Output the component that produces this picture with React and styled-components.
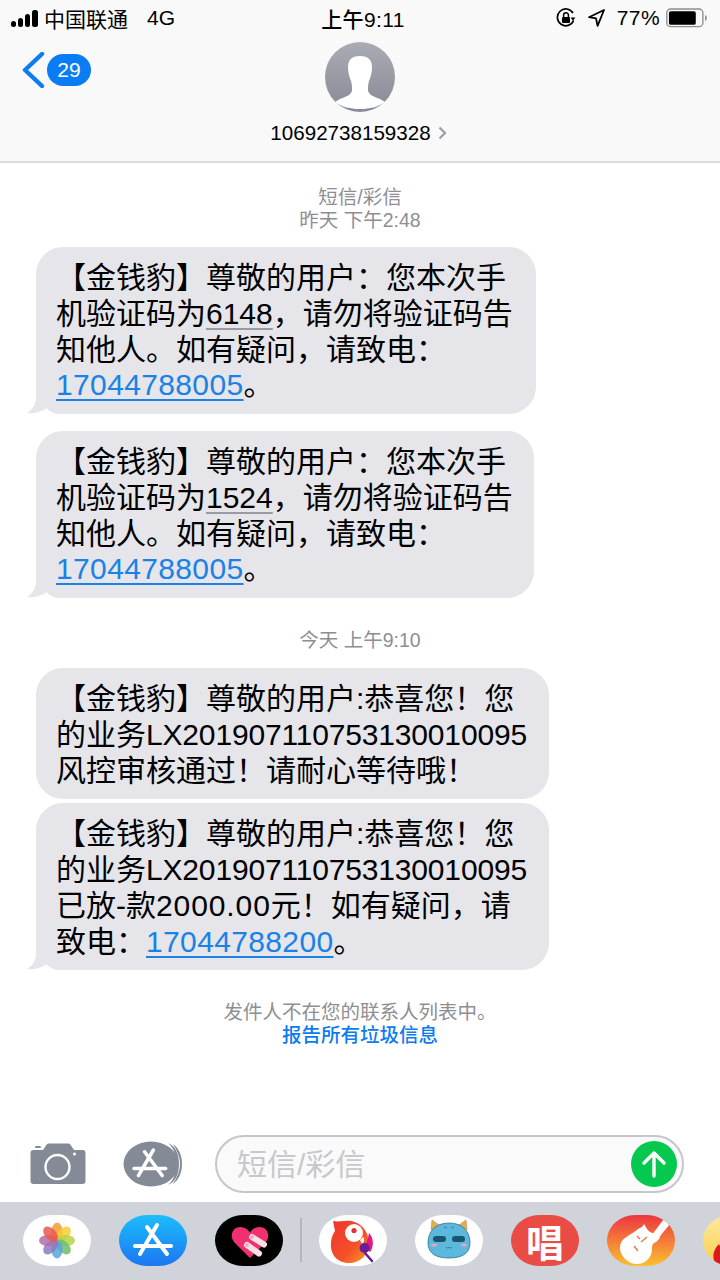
import styled, { createGlobalStyle } from "styled-components";

const GlobalStyle = createGlobalStyle`
  html, body {
    margin: 0;
    padding: 0;
    background: #fff;
  }
  body {
    font-family: "Liberation Sans", "Noto Sans CJK SC", sans-serif;
    color: #000;
  }
`;

const Page = styled.div`
  width: 720px;
  height: 1280px;
  display: flex;
  flex-direction: column;
  overflow: hidden;
`;

const Header = styled.header`
  height: 161px;
  flex: none;
  background: #f9f9f9;
  border-bottom: 2px solid #dcdcde;
`;

const StatusBar = styled.div`
  height: 36px;
  padding: 0 13px 0 11px;
  display: grid;
  grid-template-columns: 1fr auto 1fr;
  align-items: center;
  font-size: 21px;
`;

const StatusLeft = styled.div`
  display: flex;
  align-items: center;
  gap: 6px;
`;

const Carrier = styled.span`
  margin-right: 13px;
`;

const StatusRight = styled.div`
  display: flex;
  align-items: center;
  justify-content: flex-end;
  gap: 12px;
`;

const BatteryGroup = styled.div`
  display: flex;
  align-items: center;
  gap: 6px;
  letter-spacing: 0.4px;
`;

const Time = styled.div`
  font-weight: 500;
  margin-left: 8px;
  letter-spacing: 0.4px;
`;

const NavRow = styled.div`
  margin-top: 6px;
  display: grid;
  grid-template-columns: 1fr auto 1fr;
`;

const BackLink = styled.div`
  display: flex;
  align-items: center;
  align-self: start;
  gap: 2px;
  margin: 10px 0 0 22px;
  height: 36px;
`;

const CountBadge = styled.span`
  width: 44px;
  height: 32px;
  border-radius: 16px;
  background: #0a7cf6;
  color: #fff;
  font-size: 21px;
  display: flex;
  align-items: center;
  justify-content: center;
`;

const Contact = styled.div`
  display: flex;
  flex-direction: column;
  align-items: center;
  gap: 9px;
`;

const ContactName = styled.div`
  display: flex;
  align-items: center;
  gap: 7px;
  font-size: 20.6px;
  line-height: 24px;
  margin-left: -3px;
`;

const Thread = styled.main`
  flex: 1;
  padding: 23px 0 0 36px;
  display: flex;
  flex-direction: column;
  align-items: flex-start;
  overflow: hidden;
`;

const Stamp = styled.div`
  align-self: stretch;
  margin: ${(p) => p.$top || 0}px 36px ${(p) => p.$bottom || 0}px 0;
  text-align: center;
  color: #8e8e93;
  font-size: 19.5px;
  line-height: 23px;
`;

const Bubble = styled.div`
  position: relative;
  width: ${(p) => p.$width}px;
  box-sizing: border-box;
  margin-bottom: ${(p) => p.$gap}px;
  padding: 13px 0 11px 20px;
  background: #e5e5ea;
  border-radius: 27px;
  font-size: 30px;
  line-height: 35.75px;
  white-space: nowrap;
`;

const BubbleLine = styled.span`
  position: relative;
  z-index: 1;
`;

const BubbleTail = styled.svg`
  position: absolute;
  left: -10px;
  bottom: 0;
`;

const Code = styled.span`
  text-decoration: underline;
  text-decoration-color: #9a9aa2;
  text-decoration-thickness: 1.5px;
  text-underline-offset: 4px;
`;

const PhoneLink = styled.span`
  color: #1a82e6;
  letter-spacing: 0.36px;
  text-decoration: underline;
  text-decoration-thickness: 1.5px;
  text-underline-offset: 4px;
`;

const OrderNo = styled.span`
  letter-spacing: -0.17px;
`;

const Amount = styled.span`
  letter-spacing: 0.9px;
`;

const SpamNote = styled.div`
  align-self: stretch;
  margin: 31px 36px 0 0;
  text-align: center;
  font-size: 19.5px;
  line-height: 23px;
  color: #8e8e93;
`;

const SpamLink = styled.div`
  color: #0a7cf0;
  font-weight: 500;
`;

const Composer = styled.div`
  flex: none;
  height: 82px;
  box-sizing: border-box;
  padding: 15px 36px 9px 30px;
  display: flex;
  align-items: center;
`;

const CameraButton = styled.svg`
  margin-right: 37px;
  flex: none;
`;

const AppsButton = styled.svg`
  margin-right: 32px;
  flex: none;
`;

const InputPill = styled.div`
  flex: 1;
  height: 58px;
  box-sizing: border-box;
  border: 2px solid #c6c6cc;
  border-radius: 29px;
  background: #fafafa;
  padding: 0 5px 0 20px;
  display: flex;
  align-items: center;
  justify-content: space-between;
`;

const Placeholder = styled.span`
  color: #c7c7cc;
  font-size: 30px;
  line-height: 40px;
  margin-top: 2px;
`;

const SendButton = styled.span`
  width: 46px;
  height: 46px;
  border-radius: 50%;
  background: #05c84f;
  display: flex;
  align-items: center;
  justify-content: center;
`;

const Tray = styled.div`
  flex: none;
  height: 78px;
  box-sizing: border-box;
  padding: 13px 0 0 23px;
  background: #d0d3da;
  display: flex;
  align-items: flex-start;
  gap: 28px;
  overflow: hidden;
`;

const TrayApp = styled.div`
  flex: none;
  width: 68px;
  height: 51px;
  border-radius: 28px / 25.5px;
  overflow: ${(p) => (p.$clip ? "hidden" : "visible")};
  background: ${(p) => p.$bg || "#fff"};
  display: flex;
  align-items: center;
  justify-content: center;
`;

const SingGlyph = styled.span`
  color: #fff;
  font-family: "Noto Sans CJK SC", sans-serif;
  font-size: 38px;
  font-weight: 700;
  line-height: 46px;
`;

const TrayDivider = styled.div`
  flex: none;
  width: 2px;
  height: 44px;
  margin: 3px -11px 0;
  background: #b3b6bd;
`;

function Signal() {
  return (
    <svg width="27" height="17" viewBox="0 0 27 17">
      <rect x="0" y="11" width="5" height="6" rx="2.5" />
      <rect x="7" y="8" width="5" height="9" rx="2.5" />
      <rect x="14" y="4" width="5" height="13" rx="2.5" />
      <rect x="21" y="0" width="6" height="17" rx="2.5" />
    </svg>
  );
}

function OrientationLock() {
  return (
    <svg width="20" height="20" viewBox="0 0 20 20">
      <path d="M17.6 12.5A8.4 8.4 0 1 1 17 5" fill="none" stroke="#000" strokeWidth="1.7" />
      <path d="M14.6 9.6h4.8l-2.4 3.2z" />
      <rect x="6" y="9" width="8" height="6" rx="1" />
      <path d="M7.6 9V7.2a2.4 2.4 0 0 1 4.8 0V9" fill="none" stroke="#000" strokeWidth="1.5" />
    </svg>
  );
}

function LocationArrow() {
  return (
    <svg width="17" height="18" viewBox="0 0 17 18">
      <path d="M16 1 1 8.2l7 1.2 1.6 7.4z" fill="none" stroke="#000" strokeWidth="1.8" strokeLinejoin="round" />
    </svg>
  );
}

function Battery() {
  return (
    <svg width="41" height="20" viewBox="0 0 42 20">
      <rect x="0.8" y="0.8" width="37" height="18" rx="4" fill="none" stroke="#8f8f8f" strokeWidth="1.4" />
      <rect x="3" y="3" width="27.5" height="14" rx="2" />
      <path d="M40 7c1.4.4 1.8 1.6 1.8 3s-.4 2.6-1.8 3z" fill="#8f8f8f" />
    </svg>
  );
}

function BackChevron() {
  return (
    <svg width="23" height="36" viewBox="0 0 23 36">
      <path d="M20 2 3 18l17 16" fill="none" stroke="#0a7cf6" strokeWidth="4.4" strokeLinecap="round" strokeLinejoin="round" />
    </svg>
  );
}

function Avatar() {
  return (
    <svg width="70" height="70" viewBox="0 0 70 70">
      <defs>
        <linearGradient id="avatarFill" x1="0" y1="0" x2="0" y2="1">
          <stop offset="0" stopColor="#a9acb5" />
          <stop offset="1" stopColor="#878a94" />
        </linearGradient>
      </defs>
      <circle cx="35" cy="35" r="35" fill="url(#avatarFill)" />
      <path
        d="M35 14c7 0 12 3 12 11 0 5-1 9-3 14-1 3-1 6-1 9 0 5 7 7 12 9l5 3c-7 5-15 7-25 7s-18-2-25-7l5-3c5-2 12-4 12-9 0-3 0-6-1-9-2-5-3-9-3-14 0-8 5-11 12-11z"
        fill="#fff"
      />
    </svg>
  );
}

function DisclosureChevron() {
  return (
    <svg width="9" height="14" viewBox="0 0 9 14">
      <path d="M1.500 1.500 7 7l-5.500 5.500" fill="none" stroke="#9a9ea7" strokeWidth="2.200" />
    </svg>
  );
}

function Tail() {
  return (
    <BubbleTail width="40" height="28" viewBox="0 0 40 28">
      <path d="M10 0v11c0 8-4 13-9 16 7 1 14-1 19.700-5 3.300 3.500 6.300 6 12.300 6h7V0z" fill="#e5e5ea" />
    </BubbleTail>
  );
}

function Camera() {
  return (
    <CameraButton width="56" height="42" viewBox="0 0 56 42">
      <path
        fill="#858b96"
        d="M3.500 7H13l3.500-5.200C17.200.9 18 .5 19 .5h19c1 0 1.800.4 2.500 1.300L44 7h8.500C54.500 7 55.500 8 55.500 10v28c0 2-1 3-3 3h-49c-2 0-3-1-3-3V10c0-2 1-3 3-3z"
      />
      <rect x="5" y="3" width="6" height="2" rx="1" fill="#858b96" />
      <circle cx="27.500" cy="24" r="12" fill="none" stroke="#fff" strokeWidth="2.400" />
      <circle cx="44.500" cy="11" r="1.600" fill="#fff" />
    </CameraButton>
  );
}

function StoreMark({ x = 0, y = 0, scale = 1 }) {
  return (
    <g
      transform={`translate(${x} ${y}) scale(${scale})`}
      fill="none"
      stroke="#fff"
      strokeWidth="4"
      strokeLinecap="round"
    >
      <path d="M22 0 5 29" />
      <path d="M12 2 32 29" />
      <path d="M0 21h36" />
    </g>
  );
}

function AppsIcon() {
  return (
    <AppsButton width="60" height="46" viewBox="0 0 60 46">
      <ellipse cx="28" cy="23" rx="27.500" ry="22.500" fill="#858b96" />
      <path d="M45 2c8 3 11 12 11 21s-3 18-11 21c6-5 8-12 8-21S51 7 45 2z" fill="#858b96" />
      <path d="M50 3c6 4 9 12 9 20s-3 16-9 20c3-5 7-12 7-20S53 8 50 3z" fill="#858b96" />
      <StoreMark x={11} y={9} scale={0.88} />
    </AppsButton>
  );
}

function SendArrow() {
  return (
    <svg width="26" height="28" viewBox="0 0 26 28">
      <path d="M13 26V3M3 13 13 3l10 10" fill="none" stroke="#fff" strokeWidth="3.400" strokeLinecap="round" strokeLinejoin="round" />
    </svg>
  );
}

const PETALS = ["#f49a30", "#f7cc33", "#b7d445", "#6dbd70", "#58a5d8", "#8a7cc0", "#b36ea8", "#e8594d"];

function PhotosIcon() {
  return (
    <svg width="68" height="51" viewBox="0 0 68 51">
      {PETALS.map((color, i) => (
        <ellipse
          key={color}
          cx="34"
          cy="16.500"
          rx="5.600"
          ry="9"
          fill={color}
          opacity="0.85"
          transform={`rotate(${i * 45} 34 25.500)`}
        />
      ))}
    </svg>
  );
}

function StoreIcon() {
  return (
    <svg width="68" height="51" viewBox="0 0 68 51">
      <StoreMark x={16} y={10} scale={1} />
    </svg>
  );
}

function HeartIcon() {
  return (
    <svg width="68" height="51" viewBox="0 0 68 51">
      <path d="M35 43 20 28c-5-5-4-13 2-15.500 5-1.800 10 .5 13 5 3-4.500 8-6.800 13-5 6 2.500 7 10.500 2 15.500z" fill="#f1306f" />
      <path d="M37 22 49 29.500M32 30 44 38.500" fill="none" stroke="#f9dfe6" strokeWidth="6" strokeLinecap="round" />
      <circle cx="37" cy="22" r="2" fill="#f4a9c0" />
      <circle cx="32" cy="30" r="2" fill="#f4a9c0" />
    </svg>
  );
}

function ParrotIcon() {
  return (
    <svg width="68" height="51" viewBox="0 0 68 51">
      <defs>
        <linearGradient id="parrotFill" x1="0" y1="0" x2="1" y2="1">
          <stop offset="0" stopColor="#f0352b" />
          <stop offset="0.6" stopColor="#f4502a" />
          <stop offset="1" stopColor="#f7a11f" />
        </linearGradient>
      </defs>
      <path d="M14 6c4 1 8 0 12 0 12-2 24 8 24 22 0 12-9 20-20 20-12 0-19-9-18-20 0-5 2-9 4-12z" fill="url(#parrotFill)" />
      <path d="M50 18c5 5 5 14 1 19l-6-4c3-5 4-10 5-15z" fill="#e6167f" />
      <circle cx="35" cy="18" r="9" fill="#fff" />
      <circle cx="35" cy="15.500" r="2.600" fill="#e9302c" />
      <path d="M44 22c2 2 1 6-1 7l-2-4z" fill="#fff" />
      <path d="M46 38l7 8" stroke="#6a1e9c" strokeWidth="2.500" strokeLinecap="round" />
      <circle cx="45.500" cy="33" r="5" fill="#6a1e9c" />
    </svg>
  );
}

function MonsterIcon() {
  return (
    <svg width="68" height="51" viewBox="0 0 68 51">
      <path d="M16 15 17 5l7 5zM52 15 51 5l-7 5z" fill="#e3ad52" stroke="#b98b3a" strokeWidth="0.600" />
      <path d="M34 8c14 0 21 9 21 20 0 11-9 15-21 15s-21-4-21-15c0-11 7-20 21-20z" fill="#5cb8dc" stroke="#34708a" strokeWidth="0.800" />
      <rect x="18" y="21" width="13" height="6" rx="3" fill="#17566e" />
      <rect x="37" y="21" width="13" height="6" rx="3" fill="#17566e" />
      <ellipse cx="19" cy="30" rx="3" ry="1.500" fill="#e7a4c0" />
      <ellipse cx="49" cy="30" rx="3" ry="1.500" fill="#e7a4c0" />
      <path d="M31 32c1 1.500 2 1.500 3 0 1 1.500 2 1.500 3 0M29 13l1.500-1 1.500 1M36 13l1.500-1 1.500 1" fill="none" stroke="#2c6a84" strokeWidth="0.800" />
    </svg>
  );
}

function GuitarIcon() {
  return (
    <svg width="68" height="51" viewBox="0 0 68 51">
      <path d="M44 21 60 0h8v3L49 26z" fill="#fff" />
      <path d="M37 9c2 3 3 6 6 8s6 1 9 3c2 2 0 5-3 7-3 1-4 3-4 7 0 8-6 15-15 15-9 0-17-8-17-16 0-9 7-11 11-14 4-2 6-5 9-6 2-1 3-2 4-4z" fill="#fff" />
      <path d="M34 27l6-5M30 21l3 3M27 31l4 5" stroke="#ee7b3a" strokeWidth="1.400" />
    </svg>
  );
}

function LastAppIcon() {
  return (
    <svg width="68" height="51" viewBox="0 0 68 51">
      <path d="M14 51c-6-8-4-16 2-22 2 6 6 6 6 6 0-8 2-16 8-20-2 14 12 18 8 36z" fill="#d9181f" />
    </svg>
  );
}

function App() {
  return (
    <Page>
      <GlobalStyle />
      <Header>
        <StatusBar>
          <StatusLeft>
            <Signal />
            <Carrier>中国联通</Carrier>
            <span>4G</span>
          </StatusLeft>
          <Time>上午9:11</Time>
          <StatusRight>
            <OrientationLock />
            <LocationArrow />
            <BatteryGroup>
              <span>77%</span>
              <Battery />
            </BatteryGroup>
          </StatusRight>
        </StatusBar>
        <NavRow>
          <BackLink>
            <BackChevron />
            <CountBadge>29</CountBadge>
          </BackLink>
          <Contact>
            <Avatar />
            <ContactName>
              10692738159328
              <DisclosureChevron />
            </ContactName>
          </Contact>
        </NavRow>
      </Header>

      <Thread>
        <Stamp>短信/彩信</Stamp>
        <Stamp $bottom={15}>昨天 下午2:48</Stamp>

        <Bubble $width={500} $gap={17}>
          <Tail />
          <BubbleLine>
            【金钱豹】尊敬的用户：您本次手<br />
            机验证码为<Code>6148</Code>，请勿将验证码告<br />
            知他人。如有疑问，请致电：<br />
            <PhoneLink>17044788005</PhoneLink>。
          </BubbleLine>
        </Bubble>

        <Bubble $width={498} $gap={0}>
          <Tail />
          <BubbleLine>
            【金钱豹】尊敬的用户：您本次手<br />
            机验证码为<Code>1524</Code>，请勿将验证码告<br />
            知他人。如有疑问，请致电：<br />
            <PhoneLink>17044788005</PhoneLink>。
          </BubbleLine>
        </Bubble>

        <Stamp $top={31} $bottom={16}>今天 上午9:10</Stamp>

        <Bubble $width={513} $gap={4}>
          【金钱豹】尊敬的用户:恭喜您！您<br />
          的业务<OrderNo>LX201907110753130010095</OrderNo><br />
          风控审核通过！请耐心等待哦！
        </Bubble>

        <Bubble $width={513} $gap={0}>
          <Tail />
          <BubbleLine>
            【金钱豹】尊敬的用户:恭喜您！您<br />
            的业务<OrderNo>LX201907110753130010095</OrderNo><br />
            已放-款<Amount>2000.00</Amount>元！如有疑问，请<br />
            致电：<PhoneLink>17044788200</PhoneLink>。
          </BubbleLine>
        </Bubble>

        <SpamNote>
          发件人不在您的联系人列表中。
          <SpamLink>报告所有垃圾信息</SpamLink>
        </SpamNote>
      </Thread>

      <Composer>
        <Camera />
        <AppsIcon />
        <InputPill>
          <Placeholder>短信/彩信</Placeholder>
          <SendButton>
            <SendArrow />
          </SendButton>
        </InputPill>
      </Composer>

      <Tray>
        <TrayApp><PhotosIcon /></TrayApp>
        <TrayApp $bg="linear-gradient(#1cbdfb, #1c76f2)"><StoreIcon /></TrayApp>
        <TrayApp $bg="#000"><HeartIcon /></TrayApp>
        <TrayDivider />
        <TrayApp><ParrotIcon /></TrayApp>
        <TrayApp><MonsterIcon /></TrayApp>
        <TrayApp $bg="#e84c45"><SingGlyph>唱</SingGlyph></TrayApp>
        <TrayApp $clip $bg="linear-gradient(#ee3542, #fbc02f)"><GuitarIcon /></TrayApp>
        <TrayApp $clip $bg="linear-gradient(#fde9a0, #fbcf4a)"><LastAppIcon /></TrayApp>
      </Tray>
    </Page>
  );
}

export default App;
